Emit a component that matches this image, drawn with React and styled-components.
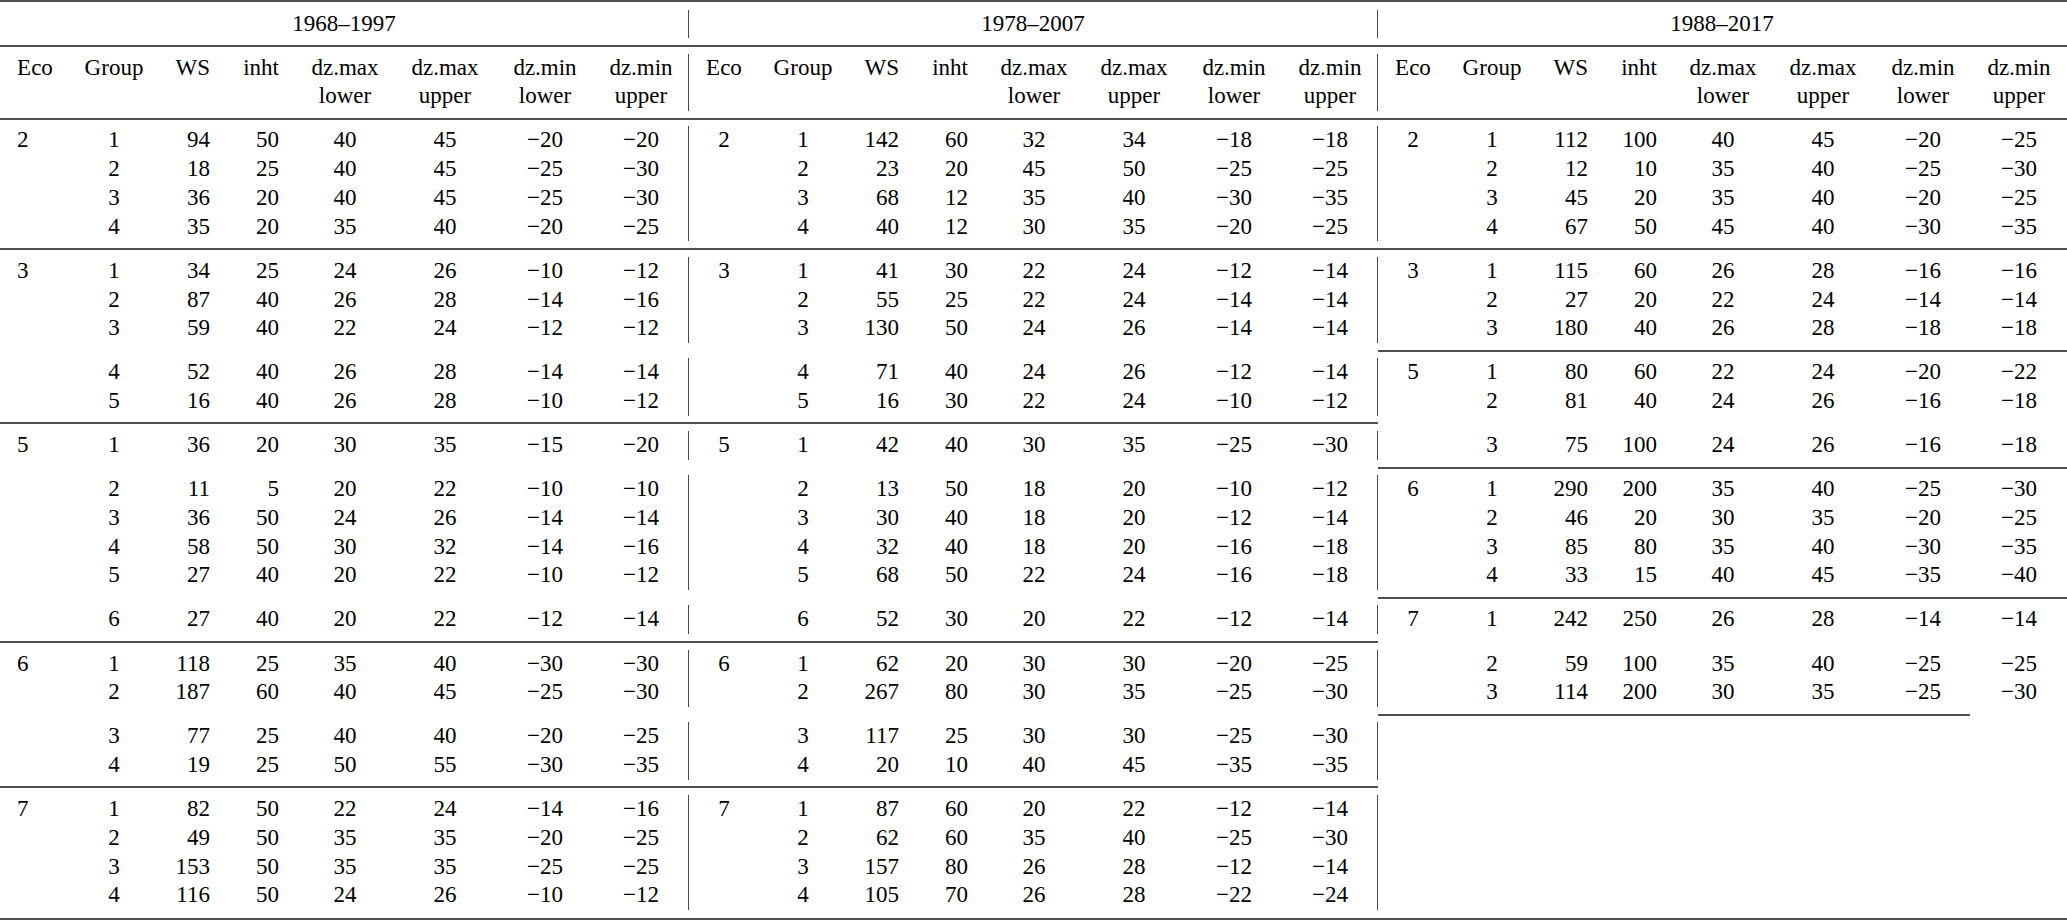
import React from 'react';
import styled, { createGlobalStyle } from 'styled-components';

const ROW = 28.75;
const GAP = 15.3;
const PANEL_W = 689;
const TRACKS = '70px 88px 52px 69px 132px 68px 132px 60px';

const GlobalStyle = createGlobalStyle`
  html, body { margin: 0; padding: 0; background: #ffffff; }
  body {
    font-family: "Liberation Serif", "Times New Roman", Times, serif;
    color: #000000;
    overflow: hidden;
  }
`;

const Table = styled.div`
  width: 2067px;
  display: flex;
  flex-direction: column;
  font-size: 23px;
`;

const Rule = styled.div`
  flex: none;
  height: 2px;
  width: ${(p) => (p.$width ? `${p.$width}px` : '100%')};
  background: #4f4f4f;
`;

const Spacer = styled.div`
  flex: none;
  height: ${(p) => (p.$half ? GAP / 2 : GAP)}px;
  display: flex;
  align-items: center;
`;

const Band = styled.div`
  display: flex;
  align-items: flex-start;
`;

const Panel = styled.div`
  flex: none;
  width: ${PANEL_W}px;
  display: flex;
  flex-direction: column;
`;

const Block = styled.div`
  display: flex;
  flex-direction: column;
  border-right: 1px solid ${(p) => (p.$bar ? '#4a4a4a' : 'transparent')};
`;

const GroupTitle = styled.div`
  height: ${ROW}px;
  line-height: ${ROW}px;
  text-align: center;
  white-space: nowrap;
`;

const HeadGrid = styled.div`
  display: grid;
  grid-template-columns: ${TRACKS};
  height: ${ROW * 2}px;
`;

const HeadCell = styled.div`
  display: flex;
  flex-direction: column;
  align-items: ${(p) => p.$align};
  line-height: ${ROW}px;
  white-space: nowrap;
`;

const Row = styled.div`
  display: grid;
  grid-template-columns: ${TRACKS};
  height: ${ROW}px;
  line-height: ${ROW}px;
`;

const Cell = styled.div`
  display: flex;
  justify-content: ${(p) => p.$align};
  padding-left: ${(p) => p.$pad || 0}px;
  white-space: nowrap;
`;

const COLS = [
  { head: ['Eco'], align: 'center' },
  { head: ['Group'], align: 'center' },
  { head: ['WS'], align: 'flex-end' },
  { head: ['inht'], align: 'flex-end' },
  { head: ['dz.max', 'lower'], align: 'center' },
  { head: ['dz.max', 'upper'], align: 'center' },
  { head: ['dz.min', 'lower'], align: 'center' },
  { head: ['dz.min', 'upper'], align: 'center' },
];

const P1 = `
2 1 94 50 40 45 −20 −20
. 2 18 25 40 45 −25 −30
. 3 36 20 40 45 −25 −30
. 4 35 20 35 40 −20 −25
-
3 1 34 25 24 26 −10 −12
. 2 87 40 26 28 −14 −16
. 3 59 40 22 24 −12 −12
~
. 4 52 40 26 28 −14 −14
. 5 16 40 26 28 −10 −12
-
5 1 36 20 30 35 −15 −20
~
. 2 11 5 20 22 −10 −10
. 3 36 50 24 26 −14 −14
. 4 58 50 30 32 −14 −16
. 5 27 40 20 22 −10 −12
~
. 6 27 40 20 22 −12 −14
-
6 1 118 25 35 40 −30 −30
. 2 187 60 40 45 −25 −30
~
. 3 77 25 40 40 −20 −25
. 4 19 25 50 55 −30 −35
-
7 1 82 50 22 24 −14 −16
. 2 49 50 35 35 −20 −25
. 3 153 50 35 35 −25 −25
. 4 116 50 24 26 −10 −12
`;

const P2 = `
2 1 142 60 32 34 −18 −18
. 2 23 20 45 50 −25 −25
. 3 68 12 35 40 −30 −35
. 4 40 12 30 35 −20 −25
-
3 1 41 30 22 24 −12 −14
. 2 55 25 22 24 −14 −14
. 3 130 50 24 26 −14 −14
~
. 4 71 40 24 26 −12 −14
. 5 16 30 22 24 −10 −12
-
5 1 42 40 30 35 −25 −30
~
. 2 13 50 18 20 −10 −12
. 3 30 40 18 20 −12 −14
. 4 32 40 18 20 −16 −18
. 5 68 50 22 24 −16 −18
~
. 6 52 30 20 22 −12 −14
-
6 1 62 20 30 30 −20 −25
. 2 267 80 30 35 −25 −30
~
. 3 117 25 30 30 −25 −30
. 4 20 10 40 45 −35 −35
-
7 1 87 60 20 22 −12 −14
. 2 62 60 35 40 −25 −30
. 3 157 80 26 28 −12 −14
. 4 105 70 26 28 −22 −24
`;

const P3 = `
2 1 112 100 40 45 −20 −25
. 2 12 10 35 40 −25 −30
. 3 45 20 35 40 −20 −25
. 4 67 50 45 40 −30 −35
-
3 1 115 60 26 28 −16 −16
. 2 27 20 22 24 −14 −14
. 3 180 40 26 28 −18 −18
-
5 1 80 60 22 24 −20 −22
. 2 81 40 24 26 −16 −18
~
. 3 75 100 24 26 −16 −18
-
6 1 290 200 35 40 −25 −30
. 2 46 20 30 35 −20 −25
. 3 85 80 35 40 −30 −35
. 4 33 15 40 45 −35 −40
-
7 1 242 250 26 28 −14 −14
~
. 2 59 100 35 40 −25 −25
. 3 114 200 30 35 −25 −30
-592
`;

function parsePanel(src) {
  const items = [];
  let rows = null;
  src
    .trim()
    .split('\n')
    .map((l) => l.trim())
    .filter(Boolean)
    .forEach((t) => {
      if (t[0] === '-' || t[0] === '~') {
        if (rows) {
          items.push({ kind: 'block', rows });
          rows = null;
        }
        items.push({
          kind: 'gap',
          rule: t[0] === '-',
          width: t.length > 1 ? Number(t.slice(1)) : null,
        });
      } else {
        const cells = t.split(/\s+/).map((c) => (c === '.' ? '' : c));
        if (!rows) rows = [];
        rows.push(cells);
      }
    });
  if (rows) items.push({ kind: 'block', rows });
  return items;
}

const PANELS = [
  { title: '1968–1997', src: P1, bar: true, ecoLeft: true },
  { title: '1978–2007', src: P2, bar: true, ecoLeft: false },
  { title: '1988–2017', src: P3, bar: false, ecoLeft: false },
].map((p) => ({ ...p, items: parsePanel(p.src) }));

function DataRow({ cells, ecoLeft }) {
  return (
    <Row>
      {cells.map((c, k) => {
        const isEco = k === 0;
        const align = isEco && ecoLeft ? 'flex-start' : COLS[k].align;
        return (
          <Cell key={k} $align={align} $pad={isEco && ecoLeft ? 17 : 0}>
            {c}
          </Cell>
        );
      })}
    </Row>
  );
}

function PanelBody({ panel }) {
  return (
    <Panel>
      {panel.items.map((it, i) =>
        it.kind === 'block' ? (
          <Block key={i} $bar={panel.bar}>
            {it.rows.map((r, j) => (
              <DataRow key={j} cells={r} ecoLeft={panel.ecoLeft} />
            ))}
          </Block>
        ) : (
          <Spacer key={i}>{it.rule && <Rule $width={it.width} />}</Spacer>
        )
      )}
    </Panel>
  );
}

export default function App() {
  return (
    <>
      <GlobalStyle />
      <Table>
        <Rule />
        <Spacer $half />
        <Band>
          {PANELS.map((p) => (
            <Panel key={p.title}>
              <Block $bar={p.bar}>
                <GroupTitle>{p.title}</GroupTitle>
              </Block>
            </Panel>
          ))}
        </Band>
        <Spacer>
          <Rule />
        </Spacer>
        <Band>
          {PANELS.map((p) => (
            <Panel key={p.title}>
              <Block $bar={p.bar}>
                <HeadGrid>
                  {COLS.map((c, k) => (
                    <HeadCell key={k} $align={c.align}>
                      {c.head.map((h) => (
                        <span key={h}>{h}</span>
                      ))}
                    </HeadCell>
                  ))}
                </HeadGrid>
              </Block>
            </Panel>
          ))}
        </Band>
        <Spacer>
          <Rule />
        </Spacer>
        <Band>
          {PANELS.map((p) => (
            <PanelBody key={p.title} panel={p} />
          ))}
        </Band>
        <Spacer $half />
        <Rule />
      </Table>
    </>
  );
}
